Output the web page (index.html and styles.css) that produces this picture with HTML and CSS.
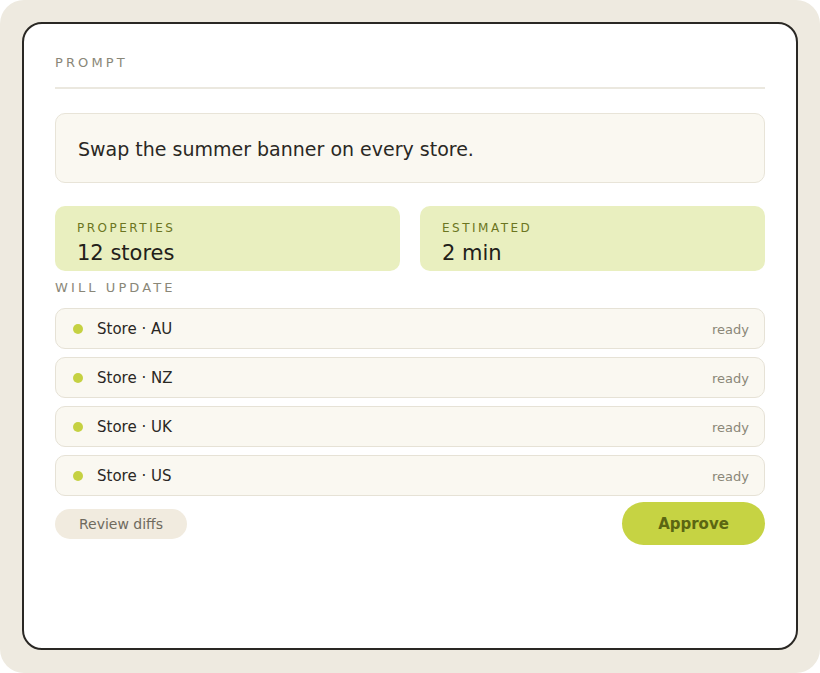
FILE: index.html
```html
<!DOCTYPE html>
<html lang="en">
<head>
    <meta charset="UTF-8">
    <title>Prompt approval</title>
    <link rel="stylesheet" href="styles.css">
</head>
<body>
<div class="frame">
    <div class="card">
        <div class="label">PROMPT</div>
        <div class="rule"></div>

        <div class="prompt">Swap the summer banner on every store.</div>

        <div class="stats">
            <div class="stat">
                <div class="stat_label">PROPERTIES</div>
                <div class="stat_value">12 stores</div>
            </div>
            <div class="stat">
                <div class="stat_label">ESTIMATED</div>
                <div class="stat_value">2 min</div>
            </div>
        </div>

        <div class="label label_update">WILL UPDATE</div>
        <ul class="rows">
            <li><span class="dot"></span><span class="name">Store · AU</span><span class="state">ready</span></li>
            <li><span class="dot"></span><span class="name">Store · NZ</span><span class="state">ready</span></li>
            <li><span class="dot"></span><span class="name">Store · UK</span><span class="state">ready</span></li>
            <li><span class="dot"></span><span class="name">Store · US</span><span class="state">ready</span></li>
        </ul>

        <div class="actions">
            <a class="btn_review" href="javascript:;">Review diffs</a>
            <a class="btn_approve" href="javascript:;">Approve</a>
        </div>
    </div>
</div>
</body>
</html>
```

FILE: styles.css
```css
*{
    margin: 0;
    padding: 0;
    box-sizing: border-box;
}
html,body{
    background-color: #fff;
}
body{
    font-family: "DejaVu Sans", "Liberation Sans", sans-serif;
    color: #2a2824;
}
.frame{
    width: 820px;
    height: 673px;
    padding: 22px;
    background-color: #eeeae0;
    border-radius: 24px;
}
.card{
    height: 628px;
    border: 2px solid #2a2824;
    border-radius: 20px;
    background-color: #fff;
    padding: 31px 31px 0;
    display: flex;
    flex-direction: column;
}
.label{
    font-size: 13px;
    line-height: 16px;
    letter-spacing: 3.1px;
    color: #8a8778;
}
.rule{
    height: 2px;
    background-color: #ebe8df;
    margin-top: 16px;
}
.prompt{
    margin-top: 24px;
    height: 70px;
    display: flex;
    align-items: center;
    padding: 2px 22px 0;
    font-size: 19px;
    background-color: #faf8f1;
    border: 1px solid #e8e4d8;
    border-radius: 10px;
}
.stats{
    margin-top: 23px;
    display: grid;
    grid-template-columns: 1fr 1fr;
    gap: 20px;
}
.stat{
    height: 65px;
    background-color: #e9efbf;
    border-radius: 10px;
    padding: 15px 22px 0;
}
.stat_label{
    font-size: 12px;
    line-height: 14px;
    letter-spacing: 2.5px;
    color: #6b7521;
}
.stat_value{
    font-size: 21px;
    line-height: 26px;
    margin-top: 5px;
    color: #222019;
}
.label_update{
    margin-top: 9px;
}
.rows{
    list-style: none;
    margin-top: 12px;
    display: flex;
    flex-direction: column;
    gap: 8px;
}
.rows li{
    height: 41px;
    display: flex;
    align-items: center;
    padding: 1px 15px 0 17px;
    background-color: #faf8f1;
    border: 1px solid #e6e2d6;
    border-radius: 10px;
}
.dot{
    width: 10px;
    height: 10px;
    border-radius: 50%;
    background-color: #c5d142;
    margin-right: 14px;
}
.name{
    font-size: 15px;
    flex: 1;
}
.state{
    font-size: 13px;
    color: #8a8778;
}
.actions{
    margin-top: 6px;
    display: flex;
    justify-content: space-between;
    align-items: center;
}
.btn_review{
    width: 132px;
    height: 30px;
    display: flex;
    align-items: center;
    justify-content: center;
    border-radius: 15px;
    background-color: #f1ebdf;
    font-size: 14px;
    color: #6f6a5e;
    text-decoration: none;
}
.btn_approve{
    width: 143px;
    height: 43px;
    display: flex;
    align-items: center;
    justify-content: center;
    border-radius: 22px;
    background-color: #c6d343;
    font-size: 15px;
    font-weight: bold;
    color: #5b6612;
    text-decoration: none;
}
```
